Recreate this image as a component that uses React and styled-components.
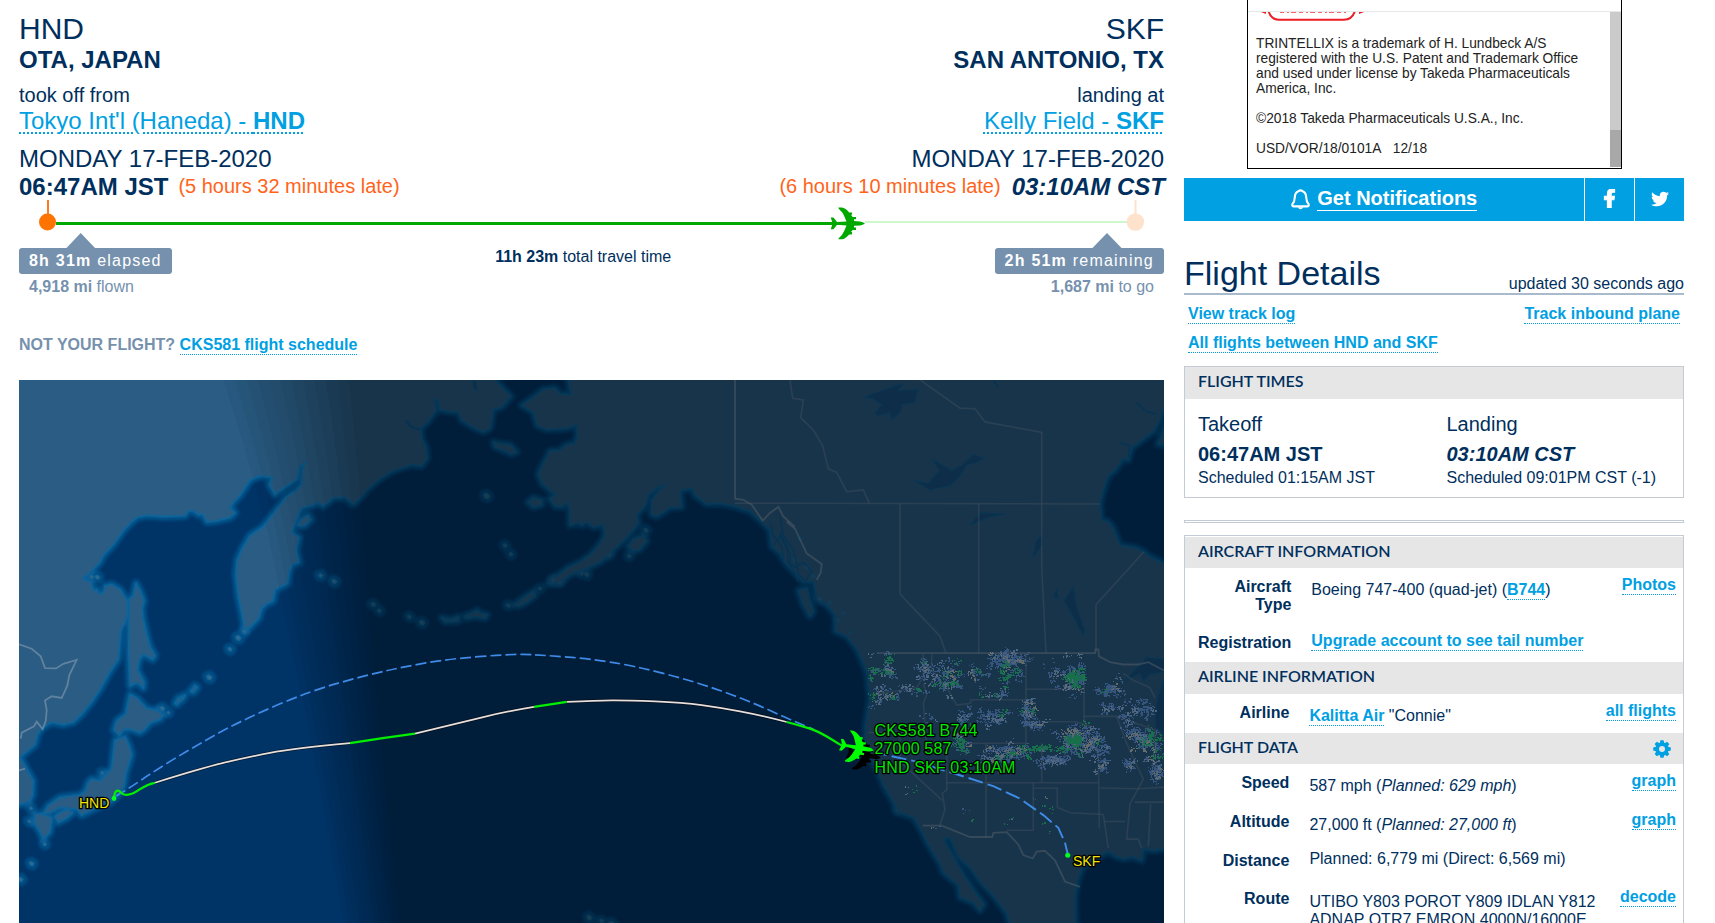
import React from "react";
import styled, { createGlobalStyle, css } from "styled-components";
import { FaFacebookF, FaTwitter } from "react-icons/fa";

const navy = "#002f5d";
const sky = "#00a0e2";
const slate = "#7691ad";
const edge = "#c3ccd5";

const GlobalStyle = createGlobalStyle`
  html, body { margin: 0; height: 100%; overflow: hidden; background: #fff; }
  body { font-family: "Liberation Sans", Arial, sans-serif; font-size: 16px; line-height: 18px; color: ${navy}; }
  * { box-sizing: border-box; }
`;

const Page = styled.div`
  display: flex;
  gap: 20px;
  width: 1715px;
  height: 923px;
  padding: 0 31px 0 19px;
  overflow: hidden;
`;
const MainColumn = styled.main`
  width: 1145px;
  flex: none;
`;
const SideColumn = styled.aside`
  width: 500px;
  flex: none;
`;

/* Flight summary */
const Endpoints = styled.header`
  display: flex;
  justify-content: space-between;
  padding-top: 11px;
  white-space: nowrap;
`;
const Endpoint = styled.div`
  text-align: ${(p) => (p.$end ? "right" : "left")};
`;
const Code = styled.div`
  font-size: 30px;
  line-height: 35px;
`;
const City = styled.div`
  font-size: 24px;
  line-height: 28px;
  font-weight: bold;
`;
const Action = styled.div`
  margin-top: 9px;
  font-size: 20px;
  line-height: 24px;
`;
const AirportName = styled.div`
  font-size: 24px;
  line-height: 28px;
`;
const AirportLink = styled.a`
  color: ${sky};
  text-decoration: underline dotted 2px;
  text-underline-offset: 3px;
`;
const DateLine = styled.div`
  margin-top: 10px;
  font-size: 24px;
  line-height: 28px;
`;
const TimeLine = styled.div`
  height: 27px;
  font-size: 24px;
  line-height: 27px;
  font-weight: bold;
`;
const Estimated = styled.i`
  margin-right: -1px;
`;
const Late = styled.span`
  font-size: 20px;
  line-height: 20px;
  font-weight: normal;
  vertical-align: 2px;
  color: #ff641a;
  margin: ${(p) => (p.$before ? "0 11px 0 0" : "0 0 0 10px")};
`;
const Progress = styled.svg`
  display: block;
  width: 1145px;
  height: 48px;
`;
const ProgressLabels = styled.div`
  display: flex;
  justify-content: space-between;
  align-items: flex-start;
  height: 88px;
`;
const ProgressEnd = styled.div`
  color: ${slate};
  text-align: ${(p) => (p.$end ? "right" : "left")};
`;
const Badge = styled.div`
  height: 26px;
  padding: 0 10px 0 10px;
  line-height: 25px;
  border-radius: 3px;
  background: ${slate};
  color: #fff;
  letter-spacing: 1.22px;
`;
const Mileage = styled.div`
  padding: 4px 10px 0;
`;
const TotalTime = styled.div`
  padding-left: 0;
`;
const NotYours = styled.div`
  height: 44px;
  font-weight: bold;
  color: ${slate};
`;
const Link = styled.a`
  color: ${sky};
  font-weight: bold;
  padding-bottom: 1px;
  border-bottom: 1px dotted ${sky};
`;
const MapFrame = styled.div`
  height: 543px;
  overflow: hidden;
  background: #003366;
`;
const MapSvg = styled.svg`
  display: block;
  width: 1145px;
  height: 543px;
`;

/* Sidebar */
const Ad = styled.section`
  width: 375px;
  height: 169px;
  margin-left: 63px;
  border: 1px solid #000;
  border-top: 0;
  padding-top: 11px;
  color: #222;
`;
const AdScroller = styled.div`
  display: flex;
  height: 156px;
  border-top: 1px solid #e8e8e8;
`;
const AdCopy = styled.div`
  flex: 1;
  padding-left: 8px;
  font-size: 13.75px;
  line-height: 15px;
  white-space: pre;
`;
const AdLogo = styled.svg`
  display: block;
  width: 112px;
  height: 10px;
  margin-bottom: 14px;
`;
const AdText = styled.p`
  margin: 0 0 15px;
`;
const ScrollTrack = styled.div`
  width: 11px;
  background: #cacaca;
  padding-top: 118px;
`;
const ScrollThumb = styled.div`
  height: 37px;
  background: #a8a8a8;
`;
const ShareBar = styled.nav`
  display: grid;
  grid-template-columns: 1fr 49px 49px;
  gap: 1px;
  height: 43px;
  margin-top: 9px;
  color: #fff;
`;
const ShareButton = styled.a`
  display: flex;
  align-items: center;
  justify-content: center;
  background: ${sky};
  font-size: ${(p) => p.$size || 19}px;
  padding-bottom: ${(p) => p.$lift || 2}px;
`;
const Notify = styled(ShareButton)`
  align-items: flex-start;
  gap: 7.5px;
  font-size: 20px;
  font-weight: bold;
  padding: 9px 0 0;
`;
const BellIcon = styled.svg`
  width: 19px;
  height: 21px;
  margin-top: 2px;
`;
const NotifyText = styled.span`
  height: 24px;
  line-height: 22px;
  border-bottom: 1px solid #fff;
`;
const SideHeading = styled.div`
  display: flex;
  justify-content: space-between;
  align-items: flex-end;
  margin-top: 32px;
  height: 42px;
  border-bottom: 2px solid #a9bacd;
`;
const Title = styled.h2`
  margin: 0;
  font-size: 34px;
  line-height: 40px;
  font-weight: normal;
`;
const Updated = styled.span`
  line-height: 18px;
`;
const TrackLinks = styled.div`
  display: flex;
  flex-wrap: wrap;
  justify-content: space-between;
  row-gap: 11px;
  height: 71px;
  align-content: flex-start;
  padding: 10px 4px 0;
`;
const Panel = styled.section`
  border: 1px solid ${edge};
  ${(p) => p.$inset && css`padding-top: 1px; margin-top: 12px; height: 420px;`}
`;
const PanelTitle = styled.h3`
  display: flex;
  justify-content: space-between;
  margin: 0;
  height: ${(p) => p.$h || 31}px;
  padding: 0 12px 0 13px;
  background: #e6e6e6;
  font: 600 16px/28px Lato, sans-serif;
`;
const GearIcon = styled.svg`
  width: 18px;
  height: 18px;
  margin-top: 7px;
`;
const Times = styled.div`
  display: grid;
  grid-template-columns: 248.5px 1fr;
  padding: 13px 0 10px 13px;
`;
const TimesLabel = styled.div`
  font-size: 20px;
  line-height: 24px;
`;
const TimesValue = styled.div`
  margin: 6px 0 3px;
  font-size: 20px;
  line-height: 24px;
  font-weight: bold;
  font-style: ${(p) => (p.$estimated ? "italic" : "normal")};
`;
const Divider = styled.div`
  height: 3px;
  margin-top: 22px;
  border: 1px solid ${edge};
`;
const Row = styled.div`
  display: grid;
  grid-template-columns: ${(p) => (p.$wide ? 106.3 : 104.4)}px 20px 1fr auto;
  align-items: start;
  height: ${(p) => p.$h || 39}px;
  padding-right: 7px;
`;
const Label = styled.div`
  grid-column: 1;
  padding: ${(p) => p.$top || 9.5}px 0 0 13px;
  text-align: right;
  font-weight: bold;
`;
const Value = styled.div`
  grid-column: 3;
  padding-top: ${(p) => p.$top || 13}px;
`;
const RowAction = styled.div`
  grid-column: 4;
  padding-top: ${(p) => p.$top || 7.5}px;
`;

/* Map geometry: three survey sheets side by side, each with its own origin. */
const SHEETS = { w: 0, m: 400, e: 780 };
const project = (sheet, x, y) => [SHEETS[sheet] + x / 3, 370 + y / 2.835];
const points = (src) => {
  let sheet = "w";
  const out = [];
  src.trim().split(/\s+/).forEach((tok) => {
    if (SHEETS[tok] !== undefined) sheet = tok;
    else {
      const [x, y] = tok.split(",").map(Number);
      out.push(project(sheet, x, y));
    }
  });
  return out;
};
const f = (p) => p[0].toFixed(1) + " " + p[1].toFixed(1);
const line = (src, close) => "M" + points(src).map(f).join("L") + (close ? "Z" : "");
const curve = (src) => {
  const p = points(src);
  let d = "M" + f(p[0]);
  for (let i = 1; i < p.length - 1; i++) {
    const end = i === p.length - 2 ? p[i + 1] : [(p[i][0] + p[i + 1][0]) / 2, (p[i][1] + p[i + 1][1]) / 2];
    d += "Q" + f(p[i]) + " " + f(end);
  }
  return d;
};

const LAND = [
  "w -30,1120 57,1100 105,1062 112,1035 125,1015 155,998 190,1005 220,998 245,975 275,940 300,905 330,855 355,820 362,740 382,700 382,655 360,622 335,608 315,612 312,630 297,635 290,622 280,625 272,600 248,592 280,565 300,545 310,525 340,495 370,455 390,435 410,418 440,412 490,415 555,413 565,400 578,398 595,410 608,408 620,430 645,428 690,418 705,405 690,390 700,375 720,355 750,312 780,300 818,305 808,325 825,352 850,335 890,310 898,275 918,262 908,275 905,325 885,345 860,360 810,420 790,445 750,470 725,510 712,540 708,580 715,640 730,710 735,740 755,725 775,705 785,675 800,662 818,655 825,622 862,605 868,570 878,550 897,545 888,510 897,475 875,460 890,420 905,390 930,385 955,376 970,385 1000,362 1035,360 1060,380 1085,358 1100,340 1140,308 1180,285 1230,270 m 30,268 65,272 82,250 78,220 65,195 62,165 85,145 108,115 104,85 112,82 120,112 150,118 175,118 185,142 225,165 250,175 270,165 275,140 280,112 305,105 333,75 285,28 285,-30 w -30,-30",
  "w 20,1100 65,1105 85,1140 100,1165 98,1205 90,1222 57,1232 20,1232",
  "w 408,605 420,625 432,655 426,675 428,700 440,750 450,785 465,810 458,820 430,805 418,820 412,850 432,885 430,902 412,885 390,895 386,800 388,650 400,640",
  "w 390,920 410,930 440,960 475,965 488,980 480,990 450,1000 435,1018 420,1028 390,1018 370,1020 358,1035 342,1020 350,995 378,975 385,940",
  "w 375,1040 385,1060 395,1090 385,1120 378,1140 372,1180 355,1205 330,1225 290,1240 245,1262 230,1245 180,1240 150,1255 130,1258 145,1235 180,1212 240,1205 255,1195 265,1170 275,1160 300,1165 335,1130 345,1050",
  "w 165,1265 180,1255 200,1245 218,1255 200,1270 175,1282",
  "w 105,1260 125,1258 155,1270 150,1310 130,1330 118,1305 103,1285",
  "w 895,440 905,422 925,412 932,425 912,442",
  "m 505,-30 505,28 515,70 480,68 465,52 430,55 400,78 365,100 400,120 412,158 440,168 500,165 528,155 533,185 525,208 500,212 480,228 450,230 430,265 415,295 425,320 450,342 467,352 450,365 465,385 485,388 500,375 510,395 510,440 535,432 545,440 560,430 580,445 610,438 615,470 595,500 570,525 540,545 505,560 470,585 445,605 475,605 510,580 550,565 600,545 640,510 680,475 715,435 710,410 735,385 745,355 770,335 795,325 775,345 755,370 755,410 770,415 810,390 845,388 840,342 875,335 885,355 920,380 960,378 1000,385 1050,400 1085,430 1110,455 1115,500 1140,520 1155,545 1180,570 e 50,580 70,600 100,600 110,640 145,670 170,700 165,740 200,755 230,790 250,830 262,860 270,935 258,1000 255,1040 265,1085 290,1130 310,1175 340,1225 360,1255 400,1268 415,1290 445,1345 480,1400 490,1425 535,1460 540,1495 580,1510 600,1532 612,1515 585,1480 550,1430 520,1380 490,1330 510,1325 535,1380 570,1410 600,1450 640,1490 680,1540 700,1600 890,1600 885,1550 885,1490 895,1440 905,1415 930,1390 955,1380 985,1365 1010,1380 1030,1385 1060,1380 1085,1390 1090,1358 1120,1362 1200,1350 1200,560 1150,548 1110,530 1090,515 1070,505 1020,497 1000,450 985,430 965,425 960,380 970,340 985,300 1005,285 1030,250 1045,255 1055,220 1090,195 1120,175 1140,140 1200,-10 1200,-30",
  "e 1135,210 1160,150 1180,180 1170,215",
  "e 55,625 80,618 88,650 100,685 90,698 70,665",
  "m 685,500 700,480 730,470 740,485 720,508 700,512",
  "m 280,205 300,210 330,212 350,232 335,238 305,225 285,218",
  "m 385,375 400,362 425,370 425,382 400,388",
  "w 525,945 535,930 555,922 550,932 530,948",
  "w 572,910 585,895 592,900 580,914",
  "m 345,665 365,650 380,640 400,628 405,640 385,655 355,670",
  "m 125,702 150,708 175,700 175,712 135,713",
  "m 195,698 215,690 232,682 240,690 262,694 255,704 225,698 200,704",
];

const ISLES = `w 275,587,6 292,588,7 690,792,6 715,760,8 733,742,6 628,872,8 505,972,4 487,960,7 307,1143,5
 93,1243,5 88,1280,5 134,1345,5 95,1400,7 62,1445,7 962,583,6 1003,600,7 1120,665,7 1138,683,6 1228,700,6
 m 28,700,6 66,717,8 325,668,6 420,620,5 460,596,8 480,602,5 560,580,7 545,578,5 628,525,6 738,455,7 688,528,6
 315,498,6 333,523,6 260,358,9 568,1553,8 605,1562,6 635,1572,10
 e 60,480,9 45,540,8 80,560,9 100,585,8 120,650,8 150,660,7 190,690,6 175,710,6 210,745,6 350,1250,4`;

const LAKES = [
  "e 250,78 330,50 370,38 355,58 415,55 405,92 365,98 362,120 335,140 330,120 290,130 285,122 305,98 275,80",
  "e 400,312 445,322 478,285 455,252 515,285 545,270 580,240 615,250 590,262 560,270 540,300 510,328 450,340",
  "e 570,440 600,405 675,408 625,418",
  "e 758,530 768,485 788,468 788,495",
  "e 852,655 880,615 888,665 915,740 910,752 880,700",
  "e 820,640 830,620 835,650",
  "e 1035,880 1100,815 1200,825 1200,850 1110,862 1090,882 1080,860",
  "e 1125,1010 1130,940 1150,880 1175,900 1150,1030",
  "m 218,28 228,35 232,60 220,50",
];

const RIVERS = ["m 15,145 30,160 45,165 60,168", "e 640,28 655,50", "e 1068,92 1100,118 1130,125", "e 1018,205 1050,215 1045,250", "w 1220,145 1240,165 1260,170", "m 1110,430 1120,470 1145,500 1150,540", "m 1140,415 1150,470 1180,510 1195,570", "m 1120,500 1140,470 1170,520 1170,550 1195,600", "e 0,460 20,500 25,545 45,560 70,545 95,570 75,600 50,570"];

const BORDERS = [
  "w 57,778 95,790 122,812 135,845 168,846 190,833 230,822 208,865 202,895 185,930 155,925 135,937 140,965 137,995 128,1018 110,997 102,1010 65,1028 62,1045",
  "w 57,1135 75,1130",
  "m 1005,20 1005,365 1030,368 1055,382 1088,427 1110,405 1135,388 1150,415 1185,445 e 20,430 45,450 80,520 125,550 122,575 110,595",
  "e 290,803 945,803 947,792 955,792 957,812 990,828 1030,835 1075,835 1105,828 1152,852",
  "e 428,1292 485,1292 570,1324 637,1324 640,1312 680,1310 715,1345 730,1375 758,1385 770,1365 795,1363 825,1390 855,1450 900,1465",
];
const STATES = [
  "e 30,28 38,80 70,85 62,135 100,170 128,215 145,280 170,290 200,345 250,340 268,378",
  "m 1005,378 1140,378 e 960,380",
  "e 420,28 540,108 585,110 615,147 785,177 785,560 798,803",
  "e 360,380 360,635 400,675 480,755 498,803",
  "e 596,380 596,803",
  "e 1092,515 948,665 948,800",
  "e 455,805 455,850 500,900 530,950 572,945 572,935 738,935",
  "e 738,803 738,1058",
  "e 275,920 350,910 410,900 430,870 430,805",
  "e 430,890 440,920 430,945 440,1058",
  "e 265,1028 440,1025",
  "e 440,1058 738,1058",
  "e 738,905 912,905",
  "e 738,997 890,997 930,1010",
  "e 912,860 912,990 935,1060 955,1090 958,1300",
  "e 500,1170 955,1170",
  "e 618,1058 618,1324",
  "e 500,1058 500,1190 487,1200 495,1245 480,1290",
  "e 360,1028 360,1110 487,1220",
  "e 760,1170 760,1305 680,1305",
  "e 760,1186 832,1186 832,1240 870,1255 970,1260 985,1355",
  "e 785,1058 785,1170",
  "e 912,982 1010,982 1040,1058 1060,1100 1090,1160 1050,1230 1040,1330 1075,1330 1085,1355",
  "e 958,1185 1075,1187 1200,1180",
  "e 1065,1225 1200,1225",
  "e 1112,1230 1105,1350",
  "e 972,1280 1035,1280",
  "e 1010,982 1125,1020 1120,1130",
  "e 1030,860 1060,880 1110,900 1125,930",
];

/* Radar clusters: centre x, y, spread x, spread y, count, greenness */
const RADAR = [
  [323, 845, 12, 32, 90, 0.35], [275, 870, 16, 60, 40, 0.15], [310, 920, 28, 20, 80, 0.4], [390, 905, 40, 16, 36, 0.1],
  [435, 850, 24, 30, 80, 0.05], [498, 870, 42, 40, 190, 0.2], [580, 858, 34, 16, 50, 0.15], [683, 825, 48, 28, 260, 0.02],
  [685, 868, 28, 16, 40, 0.6], [880, 868, 24, 22, 120, 0.9], [880, 860, 34, 56, 170, 0.1], [820, 870, 20, 35, 30, 0.05], [985, 903, 42, 12, 90, 0.02],
  [742, 965, 18, 32, 120, 0.08], [765, 1005, 26, 14, 70, 0.05], [640, 985, 46, 18, 110, 0.15], [550, 985, 28, 26, 60, 0.08],
  [450, 980, 20, 24, 26, 0], [545, 1060, 24, 24, 90, 0.35], [690, 1082, 70, 22, 220, 0.08], [800, 1072, 80, 5, 80, 0.8],
  [890, 1045, 58, 38, 340, 0.08], [883, 1048, 24, 12, 110, 1], [945, 1060, 30, 34, 130, 0.02], [820, 1106, 48, 12, 130, 0.02],
  [640, 1110, 46, 20, 100, 0.1], [1035, 985, 26, 34, 60, 0.02], [1085, 955, 26, 28, 80, 0.02], [1060, 1030, 24, 18, 70, 0.02],
  [1110, 1060, 44, 38, 190, 0.2], [1130, 1138, 26, 22, 110, 0.02], [1048, 1110, 20, 22, 46, 0], [968, 1118, 20, 18, 46, 0],
  [395, 1190, 16, 28, 14, 0.4], [560, 1265, 26, 26, 10, 0.4], [795, 1260, 28, 60, 26, 0.6], [685, 1280, 14, 20, 10, 0.4],
  [470, 1295, 24, 14, 8, 0.5], [1020, 880, 16, 20, 20, 0], [990, 945, 18, 24, 30, 0], [650, 915, 44, 20, 46, 0.15], [810, 830, 14, 14, 10, 0],
];
const radarCells = (() => {
  let seed = 5811;
  const rnd = () => ((seed = (seed * 16807) % 2147483647) / 2147483647);
  const gauss = () => (rnd() + rnd() + rnd() - 1.5) / 1.05;
  const groups = { "#4f70a8": "", "#7d90ac": "", "#a39c84": "", "#18a04e": "" };
  RADAR.forEach(([cx, cy, sx, sy, n, g]) => {
    const batches = Math.ceil(n / 4);
    for (let i = 0; i < batches; i++) {
      const [bx, by] = project("e", cx + gauss() * sx * 1.1, cy + gauss() * sy * 1.1);
      const r = rnd();
      const c = r < g ? "#18a04e" : rnd() < 0.72 ? "#4f70a8" : rnd() < 0.7 ? "#7d90ac" : "#a39c84";
      const cells = n < 30 ? 2 : 8;
      for (let k = 0; k < cells; k++) {
        const x = Math.round(bx + gauss() * 4);
        const y = Math.round(by + gauss() * 3);
        const w = rnd() < 0.4 ? 2 : 1;
        groups[c] += `M${x} ${y}h${w}v${rnd() < 0.25 ? 2 : 1}h-${w}z`;
      }
    }
  });
  return Object.entries(groups);
})();

const DAY_EDGE = [[222, 375], [245, 450], [267, 530], [288, 630], [307, 720], [328, 830], [345, 930]];
const NIGHT_EDGE = [[348, 375], [356, 480], [363, 560], [371, 650], [379, 740], [390, 850], [401, 930]];
const BANDS = 12;
const TWILIGHT = Array.from({ length: BANDS }, (_, i) => {
  const t = i / (BANDS - 1);
  const left = DAY_EDGE.map((p, k) => [p[0] + (NIGHT_EDGE[k][0] - p[0]) * t, p[1]]);
  const level = Math.round((255 * (i + 1)) / BANDS);
  return { d: "M" + left.map(f).join("L") + "L1170 930L1170 375Z", fill: `rgb(${level},${level},${level})` };
});

const landPath = LAND.map((s) => line(s, true)).join("");
const islePath = (() => {
  let sheet = "w";
  return ISLES.trim().split(/\s+/).map((tok) => {
    if (SHEETS[tok] !== undefined) { sheet = tok; return ""; }
    const [x, y, r] = tok.split(",").map(Number);
    const [cx, cy] = project(sheet, x, y);
    const rr = r / 3;
    return `M${cx - rr} ${cy - rr * 0.6}l${rr} ${-rr * 0.4}l${rr} ${rr * 0.9}l${-rr * 0.6} ${rr * 0.9}l${-rr} ${-rr * 0.3}z`;
  }).join("");
})();

const PLANE = "M17 0Q15-1.7 12-2L6-2.3V-4.2H8V-6.5H4.6L3-8.6H4V-11H1.2Q-3-15.5-6-15.8H-9.5V-15Q-5-11-3.6-7L-1.5-2L-11-1.3L-14.5-5.8H-17.3L-15.6-0.8V0.8L-17.3 5.8H-14.5L-11 1.3L-1.5 2L-3.6 7Q-5 11-9.5 15V15.8H-6Q-3 15.5 1.2 11H4V8.6H3L4.6 6.5H8V4.2H6V2.3L12 2Q15 1.7 17 0Z";

const MapText = styled.text`
  font-family: "Liberation Sans", Arial, sans-serif;
  font-size: ${(p) => (p.$airport ? 14 : 16)}px;
  letter-spacing: ${(p) => (p.$airport ? 0 : 0.15)}px;
  fill: ${(p) => (p.$airport ? "#f2e600" : "#00e600")};
  stroke: #000;
  stroke-width: 2.6px;
  stroke-linejoin: round;
  paint-order: stroke;
`;

const FLOWN = [
  "w 465,1170 600,1130 740,1098 880,1073 1050,1058",
  "m 45,1031 180,1000 320,968 402,955",
  "m 500,941 590,937 680,936 850,943 960,957 1080,978 1160,998",
];
const REPORTED = [
  "w 342,1215 343,1197 356,1190 370,1206 400,1202 440,1175 465,1170",
  "w 1050,1058 1150,1043 m 45,1031",
  "m 402,955 450,948 500,941",
  "m 1160,998 e 60,1008 120,1025 185,1065",
];

function FlightMap() {
  return (
    <MapSvg viewBox="19 380 1145 543">
      <defs>
        <filter id="soft" x="-5%" y="-5%" width="110%" height="110%"><feGaussianBlur stdDeviation="1.4" /></filter>
        <mask id="dusk" maskUnits="userSpaceOnUse" x="19" y="375" width="1150" height="555">
          {TWILIGHT.map((b) => <path key={b.d} d={b.d} fill={b.fill} />)}
        </mask>
      </defs>
      <rect x="19" y="380" width="1145" height="543" fill="#003366" />
      <g fill="none" stroke="#0a6aa3" strokeLinejoin="round" filter="url(#soft)">
        <path d={landPath} strokeWidth="9" opacity=".45" />
        <path d={landPath} strokeWidth="4" opacity=".5" />
        <path d={islePath} strokeWidth="9" opacity=".5" />
      </g>
      <path d={landPath} fill="#2a5c84" stroke="#0c659b" strokeWidth="1.6" strokeLinejoin="round" />
      <path d={islePath} fill="#2f6a90" stroke="#1b6594" strokeWidth="1.2" />
      {LAKES.map((s) => <path key={s} d={line(s, true)} fill="#184f80" stroke="#125f90" strokeWidth="1.2" />)}
      {RIVERS.map((s) => <path key={s} d={line(s)} fill="none" stroke="#0a5c92" strokeWidth="1.5" />)}
      {STATES.map((s) => <path key={s} d={line(s)} fill="none" stroke="#6d88a0" strokeOpacity=".5" strokeWidth="1.6" />)}
      {BORDERS.map((s) => <path key={s} d={line(s)} fill="none" stroke="#8299ae" strokeOpacity=".62" strokeWidth="1.8" />)}
      <rect x="19" y="380" width="1145" height="543" fill="#000" fillOpacity=".43" mask="url(#dusk)" />
      <g opacity=".55">
        {radarCells.map(([c, d]) => <path key={c} d={d} fill={c} />)}
      </g>
      <path d={curve("w 348,1208 380,1190 470,1133 570,1075 720,995 930,910 1100,865 1215,841 m 140,820 350,804 450,810 560,818 700,838 880,882 1040,935 1190,1000 e 100,1018")} fill="none" stroke="#3f8be8" strokeWidth="1.7" strokeDasharray="11 4" />
      <path d={line("e 285,1085 335,1095 400,1108 480,1132 560,1155 640,1180 720,1215 790,1262 835,1298 855,1340 863,1372")} fill="none" stroke="#3f8be8" strokeWidth="1.9" strokeDasharray="15 5" strokeDashoffset="3" />
      {FLOWN.map((s) => (
        <g key={s} fill="none">
          <path d={curve(s)} stroke="#000" strokeOpacity=".5" strokeWidth="3.2" />
          <path d={curve(s)} stroke="#e6dfdc" strokeWidth="1.7" />
        </g>
      ))}
      {REPORTED.map((s) => <path key={s} d={curve(s)} fill="none" stroke="#00f000" strokeWidth="2.2" />)}
      <circle cx="114" cy="798.5" r="2.4" fill="#00ff20" />
      <circle cx="1067.7" cy="855.3" r="2.5" fill="#00ff20" />
      <path d={PLANE} transform="translate(864 755) rotate(10)" fill="#000" />
      <path d={PLANE} transform="translate(857 747.5) rotate(10)" fill="#00ff00" />
      <MapText $airport x="79" y="808">HND</MapText>
      <MapText $airport x="1073" y="866">SKF</MapText>
      <MapText x="874.5" y="736">CKS581 B744</MapText>
      <MapText x="874.5" y="754">27000 587</MapText>
      <MapText x="874.5" y="773">HND SKF 03:10AM</MapText>
    </MapSvg>
  );
}

function Gear() {
  return (
    <GearIcon viewBox="-9 -9 18 18">
      {[0, 45, 90, 135].map((a) => <path key={a} d="M-2.2 -6L-1.6 -8.8H1.6L2.2 -6V6L1.6 8.8H-1.6L-2.2 6Z" fill={sky} transform={`rotate(${a})`} />)}
      <circle r="6.6" fill={sky} />
      <circle r="3" fill="#e6e6e6" />
    </GearIcon>
  );
}

function Bell() {
  return (
    <BellIcon viewBox="0 0 19 21" fill="none" stroke="#fff" strokeWidth="2.1" strokeLinejoin="round">
      <path d="M7.4 2.2Q9.5.6 11.6 2.2Q15 3.6 15.2 8.2Q15.3 12.6 17.7 15.4Q18 17.4 16.2 17.4H2.8Q1 17.4 1.3 15.4Q3.7 12.6 3.8 8.2Q4 3.6 7.4 2.2Z" />
      <path d="M6.6 18.2Q9.5 22.4 12.4 18.2Z" fill="#fff" stroke="none" />
    </BellIcon>
  );
}

export default function App() {
  return (
    <Page>
      <GlobalStyle />
      <MainColumn>
        <Endpoints>
          <Endpoint>
            <Code>HND</Code>
            <City>OTA, JAPAN</City>
            <Action>took off from</Action>
            <AirportName><AirportLink>Tokyo Int'l (Haneda) - <b>HND</b></AirportLink></AirportName>
            <DateLine>MONDAY 17-FEB-2020</DateLine>
            <TimeLine>06:47AM JST<Late>(5 hours 32 minutes late)</Late></TimeLine>
          </Endpoint>
          <Endpoint $end>
            <Code>SKF</Code>
            <City>SAN ANTONIO, TX</City>
            <Action>landing at</Action>
            <AirportName><AirportLink>Kelly Field - <b>SKF</b></AirportLink></AirportName>
            <DateLine>MONDAY 17-FEB-2020</DateLine>
            <TimeLine><Late $before>(6 hours 10 minutes late)</Late><Estimated>03:10AM CST</Estimated></TimeLine>
          </Endpoint>
        </Endpoints>
        <Progress viewBox="19 200 1145 48">
          <rect x="56" y="222" width="790" height="3" fill="#00a800" />
          <rect x="865" y="221" width="264" height="2" fill="#ccf8cc" />
          <rect x="47" y="200" width="2" height="14" fill="#ff7a1f" />
          <circle cx="47.5" cy="222" r="8.5" fill="#ff7300" />
          <rect x="1134.5" y="200" width="2" height="14" fill="#ffe2cc" />
          <circle cx="1135.4" cy="222" r="8.7" fill="#ffe2cc" />
          <path d={PLANE} transform="translate(848 223.4)" fill="#00a800" />
          <path d="M66 248.5L80.7 233L95.5 248.5Z M1092 248.5L1107 233L1122 248.5Z" fill={slate} />
        </Progress>
        <ProgressLabels>
          <ProgressEnd>
            <Badge><b>8h 31m</b> elapsed</Badge>
            <Mileage><b>4,918 mi</b> flown</Mileage>
          </ProgressEnd>
          <TotalTime><b>11h 23m</b> total travel time</TotalTime>
          <ProgressEnd $end>
            <Badge><b>2h 51m</b> remaining</Badge>
            <Mileage><b>1,687 mi</b> to go</Mileage>
          </ProgressEnd>
        </ProgressLabels>
        <NotYours>NOT YOUR FLIGHT? <Link>CKS581 flight schedule</Link></NotYours>
        <MapFrame><FlightMap /></MapFrame>
      </MainColumn>

      <SideColumn>
        <Ad>
          <AdScroller>
            <AdCopy>
              <AdLogo viewBox="0 0 112 10" fill="none" stroke="#ee1c25">
                <path d="M12.5 -1Q15 7.8 23 7.8H88Q96 7.8 99 -1" strokeWidth="2" />
                <path d="M5 0L10 2V0ZM103 0V2L108 0Z" fill="#ee1c25" strokeWidth="0" />
                <path d="M24 .4H90" strokeWidth="1" strokeDasharray="4 3 2 2 5 3" opacity=".75" />
              </AdLogo>
              <AdText>{"TRINTELLIX is a trademark of H. Lundbeck A/S\nregistered with the U.S. Patent and Trademark Office\nand used under license by Takeda Pharmaceuticals\nAmerica, Inc."}</AdText>
              <AdText>©2018 Takeda Pharmaceuticals U.S.A., Inc.</AdText>
              <AdText>{"USD/VOR/18/0101A\u00a0\u00a0 12/18"}</AdText>
            </AdCopy>
            <ScrollTrack><ScrollThumb /></ScrollTrack>
          </AdScroller>
        </Ad>
        <ShareBar>
          <Notify><Bell /><NotifyText>Get Notifications</NotifyText></Notify>
          <ShareButton $size={19} $lift={3}><FaFacebookF strokeWidth="30" stroke="#fff" /></ShareButton>
          <ShareButton $size={18}><FaTwitter /></ShareButton>
        </ShareBar>
        <SideHeading>
          <Title>Flight Details</Title>
          <Updated>updated 30 seconds ago</Updated>
        </SideHeading>
        <TrackLinks>
          <span><Link>View track log</Link></span>
          <span><Link>Track inbound plane</Link></span>
          <span><Link>All flights between HND and SKF</Link></span>
        </TrackLinks>
        <Panel>
          <PanelTitle $h={32}>FLIGHT TIMES</PanelTitle>
          <Times>
            <div>
              <TimesLabel>Takeoff</TimesLabel>
              <TimesValue>06:47AM JST</TimesValue>
              Scheduled 01:15AM JST
            </div>
            <div>
              <TimesLabel>Landing</TimesLabel>
              <TimesValue $estimated>03:10AM CST</TimesValue>
              Scheduled 09:01PM CST (-1)
            </div>
          </Times>
        </Panel>
        <Divider />
        <Panel $inset>
          <PanelTitle>AIRCRAFT INFORMATION</PanelTitle>
          <Row $wide $h={56}>
            <Label>Aircraft Type</Label>
            <Value>Boeing 747-400 (quad-jet) (<Link>B744</Link>)</Value>
            <RowAction><Link>Photos</Link></RowAction>
          </Row>
          <Row $wide $h={38}>
            <Label>Registration</Label>
            <Value $top={7.5}><Link>Upgrade account to see tail number</Link></Value>
          </Row>
          <PanelTitle $h={32}>AIRLINE INFORMATION</PanelTitle>
          <Row>
            <Label>Airline</Label>
            <Value><Link>Kalitta Air</Link> "Connie"</Value>
            <RowAction><Link>all flights</Link></RowAction>
          </Row>
          <PanelTitle>FLIGHT DATA<Gear /></PanelTitle>
          <Row>
            <Label>Speed</Label>
            <Value $top={12.5}>587 mph (<i>Planned: 629 mph</i>)</Value>
            <RowAction><Link>graph</Link></RowAction>
          </Row>
          <Row>
            <Label>Altitude</Label>
            <Value $top={12.5}>27,000 ft (<i>Planned: 27,000 ft</i>)</Value>
            <RowAction><Link>graph</Link></RowAction>
          </Row>
          <Row $h={38}>
            <Label>Distance</Label>
            <Value $top={8}>Planned: 6,779 mi (Direct: 6,569 mi)</Value>
          </Row>
          <Row $h={60}>
            <Label>Route</Label>
            <Value>UTIBO Y803 POROT Y809 IDLAN Y812 ADNAP OTR7 EMRON 4000N/16000E</Value>
            <RowAction><Link>decode</Link></RowAction>
          </Row>
        </Panel>
      </SideColumn>
    </Page>
  );
}
